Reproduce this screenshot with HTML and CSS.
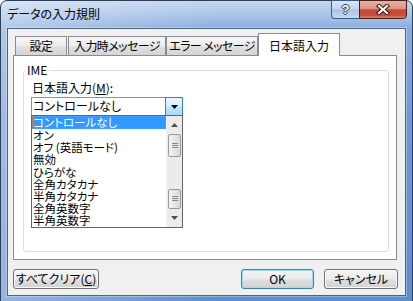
FILE: index.html
```html
<!DOCTYPE html>
<html lang="ja">
<head>
    <meta charset="UTF-8">
    <meta name="viewport" content="width=device-width, initial-scale=1.0">
    <title>データの入力規則</title>
    <link rel="stylesheet" href="styles.css">
</head>
<body>
    <div class="window">
        <div class="titlebar">
            <span class="title">データの入力規則</span>
            <div class="caption">
                <span class="cap-help">?</span>
                <span class="cap-close">
                    <svg width="16" height="11" viewBox="0 0 16 11">
                        <path d="M4 2 L12 9 M12 2 L4 9" stroke="#3a1611" stroke-width="4.2" stroke-linecap="square" fill="none"/>
                        <path d="M4 2 L12 9 M12 2 L4 9" stroke="#fff" stroke-width="2.2" stroke-linecap="square" fill="none"/>
                    </svg>
                </span>
            </div>
        </div>
        <div class="client">
            <div class="tabs">
                <span class="tab t1">設定</span>
                <span class="tab t2">入力時メッセージ</span>
                <span class="tab t3">エラー メッセージ</span>
                <span class="tab active">日本語入力</span>
            </div>
            <div class="panel">
                <fieldset class="group">
                    <legend>IME</legend>
                    <div class="field-label">日本語入力(<u>M</u>):</div>
                    <div class="combo">
                        <span class="combo-text">コントロールなし</span>
                        <span class="combo-btn">
                            <svg width="7" height="4" viewBox="0 0 7 4"><polygon points="0,0 7,0 3.5,4" fill="#000"/></svg>
                        </span>
                        <!-- 열린 드롭다운 목록 -->
                        <div class="droplist">
                            <ul class="items">
                                <li class="sel">コントロールなし</li>
                                <li>オン</li>
                                <li>オフ (英語モード)</li>
                                <li>無効</li>
                                <li>ひらがな</li>
                                <li>全角カタカナ</li>
                                <li>半角カタカナ</li>
                                <li>全角英数字</li>
                                <li>半角英数字</li>
                            </ul>
                            <div class="vscroll">
                                <span class="arrow">
                                    <svg width="7" height="4" viewBox="0 0 7 4"><polygon points="0,4 7,4 3.5,0" fill="#4d4d4d"/></svg>
                                </span>
                                <span class="thumb t-a">
                                    <svg width="6" height="5" viewBox="0 0 6 5"><path d="M0 0.5H6M0 2.5H6M0 4.5H6" stroke="#8a8a8a"/></svg>
                                </span>
                                <span class="track"></span>
                                <span class="thumb t-b">
                                    <svg width="6" height="5" viewBox="0 0 6 5"><path d="M0 0.5H6M0 2.5H6M0 4.5H6" stroke="#8a8a8a"/></svg>
                                </span>
                                <span class="arrow">
                                    <svg width="7" height="4" viewBox="0 0 7 4"><polygon points="0,0 7,0 3.5,4" fill="#4d4d4d"/></svg>
                                </span>
                            </div>
                        </div>
                    </div>
                </fieldset>
            </div>
            <div class="buttons">
                <button class="btn clear">すべてクリア(<u>C</u>)</button>
                <button class="btn ok">OK</button>
                <button class="btn cancel">キャンセル</button>
            </div>
        </div>
    </div>
</body>
</html>
```

FILE: styles.css
```css
*{
    box-sizing: border-box;
}
body{
    margin: 0;
    width: 413px;
    height: 301px;
    overflow: hidden;
    background: #fff;
    font-family: "Noto Sans CJK JP", sans-serif;
    font-size: 12px;
    font-feature-settings: "palt";
    color: #000;
}
.window{
    width: 413px;
    border: 1px solid #2c3e58;
    border-radius: 7px 7px 0 0;
    background:
        linear-gradient(90deg, rgba(255,255,255,0.35) 0, rgba(255,255,255,0) 220px),
        linear-gradient(180deg, #c3d7f0 0, #a9c4e8 14px, #88abdd 28px, #6c99d5 120px, #5e8dd0 301px);
    padding-bottom: 6px;
}
.titlebar{
    height: 27px;
    display: flex;
    align-items: flex-start;
}
.title{
    flex: 1;
    padding: 6px 0 0 6px;
    line-height: 14px;
}
.caption{
    display: flex;
    margin: -1px 5px 0 0;
}
.cap-help{
    width: 28px;
    height: 19px;
    border: 1px solid #3d5a84;
    border-right: none;
    border-radius: 0 0 0 4px;
    background: linear-gradient(180deg, #dbe7f6 0, #c2d5ee 48%, #a7c1e6 52%, #c6daf2 100%);
    color: #fff;
    font-family: "Liberation Sans", sans-serif;
    font-weight: bold;
    font-size: 13px;
    line-height: 17px;
    text-align: center;
    text-shadow: 1px 0 #2b3e5e, -1px 0 #2b3e5e, 0 1px #2b3e5e, 0 -1px #2b3e5e;
}
.cap-close{
    width: 48px;
    height: 19px;
    border: 1px solid #47201a;
    border-radius: 0 0 4px 0;
    background: linear-gradient(180deg, #eab0a3 0, #dd9181 46%, #c9483a 52%, #c54f3e 85%, #de8570 100%);
    display: flex;
    align-items: center;
    justify-content: center;
}
.client{
    height: 268px;
    margin: 0 6px;
    border: 1px solid #4f6382;
    background: #f0f0f0;
    box-shadow: 0 0 0 1px rgba(255,255,255,0.3);
}

/* 탭 */
.tabs{
    display: flex;
    align-items: flex-start;
    height: 23px;
    margin: 4px 0 0 7px;
    position: relative;
    z-index: 1;
}
.tab{
    height: 19px;
    margin-top: 3px;
    border: 1px solid #898c95;
    border-bottom: none;
    background: linear-gradient(180deg, #f6f6f6 0, #ececec 50%, #dfdfdf 55%, #d4d4d4 100%);
    text-align: center;
    line-height: 14px;
    padding-top: 2px;
    white-space: nowrap;
    letter-spacing: -0.6px;
}
.t1{
    width: 52px;
    margin-right: 1px;
}
.t2{
    width: 98px;
}
.t3{
    width: 92px;
}
.tab.active{
    width: 82px;
    height: 23px;
    margin-top: 0;
    padding-top: 5px;
    background: #fff;
    letter-spacing: 0;
}
.panel{
    height: 205px;
    margin: -1px 8px 0 5px;
    border: 1px solid #898c95;
    background: #fff;
    padding: 7px 7px 7px 9px;
    display: flex;
}
.group{
    flex: 1;
    margin: 0;
    padding: 0;
    min-width: 0;
    border: 1px solid #d5dfe5;
    border-radius: 3px;
}
.group legend{
    margin-left: 1px;
    padding: 0 2px;
    line-height: 14px;
}
.field-label{
    margin: 4px 0 0 8px;
    line-height: 14px;
}
.combo{
    position: relative;
    display: flex;
    width: 152px;
    height: 19px;
    margin: 2px 0 0 7px;
    border: 1px solid #7d95b5;
    background: #fff;
}
.combo-text{
    flex: 1;
    padding-left: 1px;
    line-height: 16px;
}
.combo-btn{
    width: 18px;
    margin: -1px -1px -1px 0;
    border: 1px solid #3c7fb1;
    background: linear-gradient(180deg, #eaf6fd 0, #d9f0fc 45%, #bee6fd 50%, #a7d9f5 100%);
    display: flex;
    align-items: center;
    justify-content: center;
}

/* 드롭다운 목록 */
.droplist{
    position: absolute;
    top: 17px;
    left: -1px;
    width: 152px;
    border: 1px solid #646464;
    background: #fff;
    display: flex;
}
.items{
    flex: 1;
    list-style: none;
    margin: 0;
    padding: 0;
}
.items li{
    height: 12.2px;
    line-height: 12px;
    font-size: 11.5px;
    padding-left: 1px;
    white-space: nowrap;
}
.items li.sel{
    height: 13px;
    background: #3399ff;
    color: #fff;
    outline: 1px dotted #d98a3a;
    outline-offset: -1px;
}
.vscroll{
    width: 16px;
    background: #ebebeb;
    border-left: 1px solid #f4f4f4;
    display: flex;
    flex-direction: column;
}
.arrow{
    height: 17px;
    display: flex;
    align-items: center;
    justify-content: center;
}
.thumb{
    margin: 0 1px;
    border: 1px solid #9a9a9a;
    border-radius: 2px;
    background: linear-gradient(90deg, #f4f4f4 0, #e6e6e6 50%, #d9d9d9 100%);
    display: flex;
    align-items: center;
    justify-content: center;
}
.t-a{
    height: 23px;
    margin-top: 1px;
}
.t-b{
    height: 20px;
    margin-bottom: 1px;
}
.track{
    flex: 1;
}

/* 하단 버튼 */
.buttons{
    display: flex;
    height: 20px;
    margin: 9px 7px 0 5px;
}
.btn{
    height: 20px;
    padding: 0;
    border: 1px solid #707070;
    border-radius: 3px;
    font: inherit;
    color: #000;
    background: linear-gradient(180deg, #f4f4f4 0, #ececec 50%, #dedede 55%, #d2d2d2 100%);
    box-shadow: inset 0 0 0 1px #fbfbfb;
    line-height: 16px;
}
.clear{
    width: 86px;
}
.ok{
    width: 73px;
    margin-left: auto;
    border-color: #3c7fb1;
    box-shadow: inset 0 0 0 1px #9edcf6;
}
.cancel{
    width: 74px;
    margin-left: 10px;
}
```
